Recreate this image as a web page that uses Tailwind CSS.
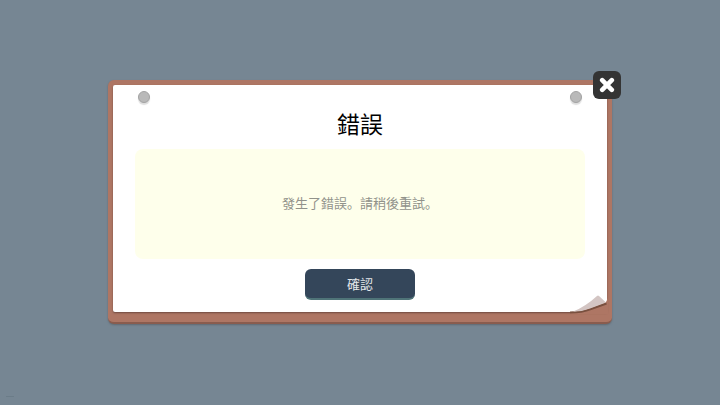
<!DOCTYPE html>
<html lang="zh">
<head>
    <meta charset="UTF-8">
    <meta name="viewport" content="width=device-width, initial-scale=1.0">
    <title>錯誤</title>
    <script src="https://cdn.jsdelivr.net/npm/@tailwindcss/browser@4"></script>
</head>
<body class="relative min-h-screen flex items-center justify-center pb-[2px] bg-[#768693] font-['Liberation_Sans','Noto_Sans_CJK_SC',sans-serif]">
    <div role="dialog" aria-labelledby="title" aria-describedby="message" class="relative w-[70%] rounded-md bg-[#ae7664] border-b-2 border-[#8a5c4e] px-[5px] pt-[5px] pb-[10px] shadow-[0_1px_2px_#5f6870]">
        <!-- paper -->
        <div class="relative flex flex-col items-center rounded-xs bg-white px-[22px] pt-6 pb-3 shadow-[0_1px_2px_#6e4a40]">
            <span class="absolute left-[25px] top-[6px] size-3 rounded-full bg-[#b9b9b9] border border-[#a3a3a3] shadow-[0_2px_1px_#dedede]"></span>
            <span class="absolute right-[25px] top-[6px] size-3 rounded-full bg-[#b9b9b9] border border-[#a3a3a3] shadow-[0_2px_1px_#dedede]"></span>
            <h1 id="title" class="text-[23px] leading-8 text-black">錯誤</h1>
            <div class="mt-2 w-full h-[110px] flex items-center justify-center rounded-lg bg-[#feffeb]">
                <p id="message" class="text-[13px] leading-5 text-[#91928a]">發生了錯誤。請稍後重試。</p>
            </div>
            <button type="button" class="mt-[10px] w-[110px] h-[31px] pt-[3px] rounded-md bg-[#34465a] border-b-2 border-[#4f7478] text-[13px] leading-5 text-[#e3e7ea]">確認</button>
            <!-- folded corner -->
            <svg class="absolute -right-px -bottom-[2px] w-[38px] h-[19px]" viewBox="0 0 38 19" aria-hidden="true">
                <path d="M0 17 Q11 17 20 13 L36 7 L38 3 V19 H0Z" fill="#ae7664"/>
                <path d="M0 17.500 Q12 17.500 21 14 L36.500 8.500" fill="none" stroke="#79503f" stroke-width="2"/>
                <path d="M3 16.500 Q15 12 27 1 Q28 0 29 1 L36 7.500 L20 13.500 Q11 17 3 16.500Z" fill="#d3c5c3"/>
            </svg>
        </div>
        <button type="button" aria-label="關閉" class="absolute -right-[9px] -top-[9px] size-7 flex items-center justify-center rounded-md bg-[#343434]">
            <svg class="size-4" viewBox="0 0 16 16" aria-hidden="true">
                <path d="M3.200 3.200 L12.800 12.800 M12.800 3.200 L3.200 12.800" stroke="white" stroke-width="4.600" stroke-linecap="round"/>
            </svg>
        </button>
    </div>
    <span class="absolute left-[6px] bottom-2 w-2 h-px bg-[#6b7c88]"></span>
</body>
</html>
